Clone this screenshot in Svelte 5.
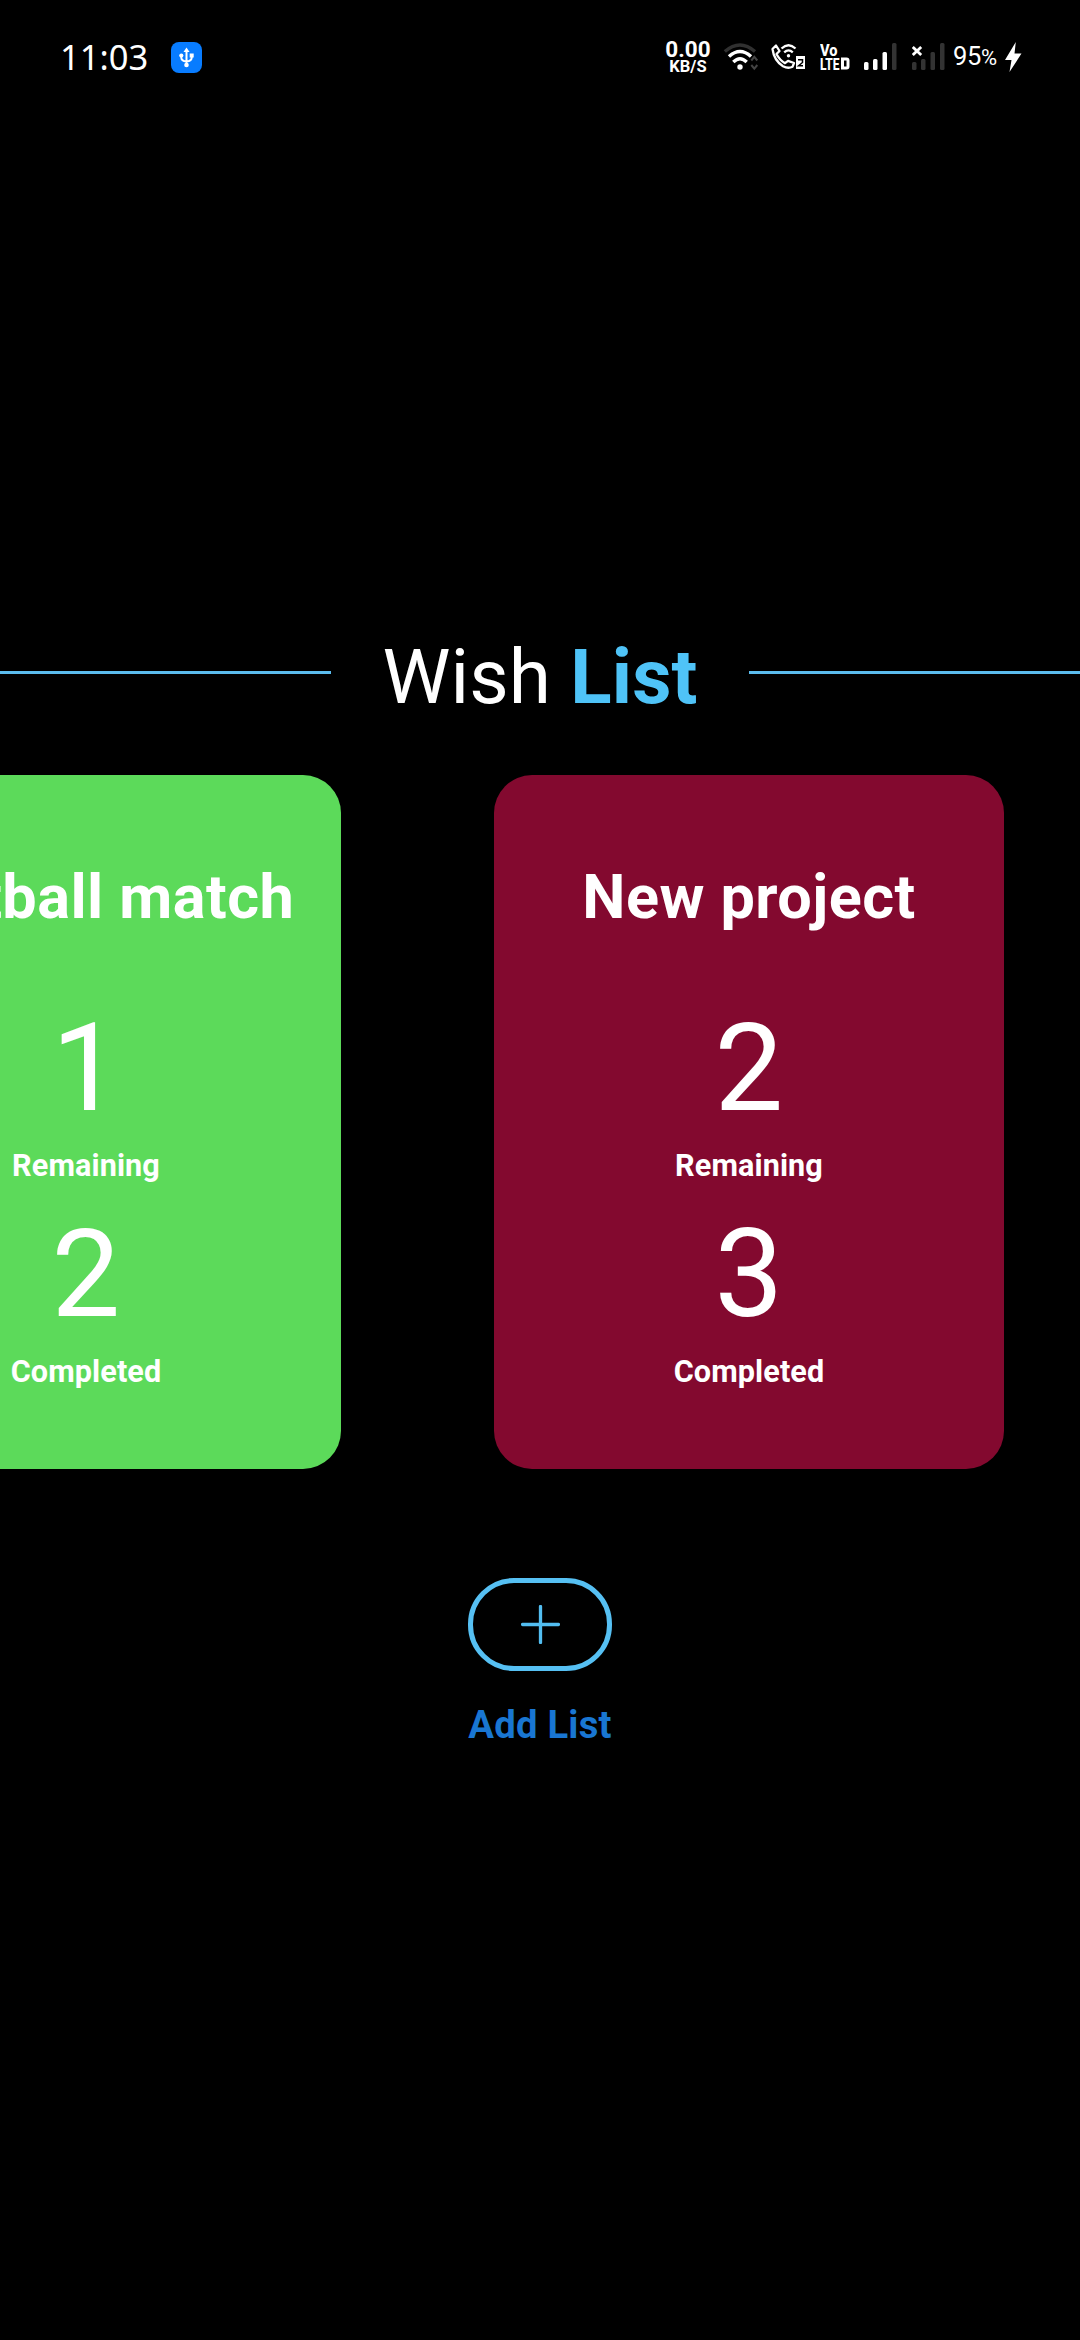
<script>
  const lists = [
    { name: 'Football match', remaining: 1, completed: 2, tone: 'green' },
    { name: 'New project', remaining: 2, completed: 3, tone: 'maroon' }
  ];
</script>

<main class="screen">
  <header class="status">
    <span class="clock">11:03</span>
    <svg class="usb" width="31" height="31" viewBox="0 0 31 31">
      <rect width="31" height="31" rx="8" fill="#087cff" />
      <g fill="none" stroke="#fff" stroke-width="2">
        <path d="M15.5 8v15M10.3 14v1.500q0 3.500 5.200 4.100q5.200-.6 5.200-4.100V14" />
      </g>
      <path d="M15.500 5.500l3 4.500h-6z" fill="#fff" />
      <circle cx="10.300" cy="13.500" r="2.100" fill="#fff" />
      <rect x="18.700" y="11.500" width="4" height="4" fill="#fff" />
      <circle cx="15.500" cy="23" r="2.300" fill="#fff" />
    </svg>

    <div class="speed"><b>0.00</b><small>KB/S</small></div>

    <svg class="wifi" width="36" height="30" viewBox="0 0 36 30" fill="none">
      <path d="M1.800 9.500Q17 -3.500 32 9.500" stroke="#303030" stroke-width="3.400" />
      <path d="M6 14.500Q17 4.500 28 14.500" stroke="#fff" stroke-width="3.400" />
      <path d="M10.300 20Q17 13.500 23.700 20" stroke="#fff" stroke-width="3.400" />
      <circle cx="17" cy="25" r="2.700" fill="#fff" />
      <path d="M28.300 18.500l3-3.600 3 3.600M28.300 23l3 3.600 3-3.600" stroke="#444" stroke-width="2" />
    </svg>

    <svg class="call" width="36" height="28" viewBox="0 0 36 28" fill="none" stroke="#fff">
      <path d="M1.500 6L5 2.500 8.500 8 5.500 11q3 6 8.500 9.200l3-2.400 6 2.200-1.500 3.800q-4.500 2.200-9.500-.6Q3 17.500 1.500 6z" stroke-width="2.300" stroke-linejoin="round" />
      <path d="M10.500 5.500Q17.500-1 24.500 5.500M13.200 9.300q4.300-3.900 8.600 0" stroke-width="2.300" />
      <circle cx="17.500" cy="12.800" r="1.700" fill="#fff" stroke="none" />
      <rect x="25" y="13" width="9" height="13" fill="#fff" stroke="none" />
      <path d="M27 16.700h4.500v2.800L27.600 22.800h4.400" stroke="#000" stroke-width="1.500" />
    </svg>

    <svg class="volte" width="31" height="30" viewBox="0 0 31 30">
      <text x="0" y="14" font-size="17" textLength="17.500" lengthAdjust="spacingAndGlyphs">Vo</text>
      <text x="0" y="27.500" font-size="17" textLength="19.500" lengthAdjust="spacingAndGlyphs">LTE</text>
      <path d="M22.500 17h4q1.500 0 1.500 1.500v6q0 1.500-1.500 1.500h-4z" fill="none" stroke="#fff" stroke-width="3" />
    </svg>

    <svg class="signal" width="33" height="28" viewBox="0 0 33 28" fill="#fff">
      <rect x="0" y="19" width="4.500" height="8" rx="1.500" />
      <rect x="9" y="16" width="4.500" height="11" rx="1.500" />
      <rect x="18.500" y="9" width="4.500" height="18" rx="1.500" />
      <rect x="28" y="0" width="4.500" height="27" rx="1.500" fill="#333" />
    </svg>

    <svg class="signal second" width="33" height="28" viewBox="0 0 33 28" fill="#333">
      <rect x="0" y="19" width="4.500" height="8" rx="1.500" />
      <rect x="9" y="16" width="4.500" height="11" rx="1.500" />
      <rect x="18.500" y="9" width="4.500" height="18" rx="1.500" />
      <rect x="28" y="0" width="4.500" height="27" rx="1.500" />
      <path d="M.8 4l8.400 8M9.200 4l-8.400 8" stroke="#fff" stroke-width="2.800" />
    </svg>

    <span class="percent">95<i>%</i></span>
    <svg class="bolt" width="17" height="30" viewBox="0 0 17 30">
      <path d="M10.800 0L0 18h6.500L4.500 30 16.500 11.500H9.500z" fill="#fff" />
    </svg>
  </header>

  <section class="heading">
    <div class="rule"></div>
    <h1>Wish <b>List</b></h1>
    <div class="rule"></div>
  </section>

  <section class="lists">
    {#each lists as list}
      <article class="card {list.tone}">
        <h2>{list.name}</h2>
        <div class="stat">
          <span class="count">{list.remaining}</span>
          <span class="label">Remaining</span>
        </div>
        <div class="stat">
          <span class="count">{list.completed}</span>
          <span class="label">Completed</span>
        </div>
      </article>
    {/each}
  </section>

  <section class="add">
    <button aria-label="Add List">
      <svg width="39" height="39" viewBox="0 0 39 39">
        <path d="M19.500 1.500v36M1.500 19.500h36" stroke="#52bdf0" stroke-width="3.300" stroke-linecap="round" />
      </svg>
    </button>
    <span>Add List</span>
  </section>
</main>

<style>
  :global(body) {
    margin: 0;
    background: #000;
  }
  .screen {
    width: 1080px;
    height: 2340px;
    overflow: hidden;
    background: #000;
    color: #fff;
    font-family: Roboto, 'Liberation Sans', sans-serif;
  }
  .status {
    display: flex;
    align-items: center;
    box-sizing: border-box;
    height: 114px;
    padding-left: 60px;
  }
  .clock {
    width: 111px;
    font: 400 34.500px/48px 'Noto Sans', Roboto, sans-serif;
    white-space: nowrap;
  }
  .speed {
    display: flex;
    flex-direction: column;
    align-items: center;
    width: 46px;
    margin-left: 463px;
  }
  .speed b {
    font-size: 22.500px;
    line-height: 17px;
  }
  .speed small {
    margin-top: 1px;
    font-size: 16.500px;
    font-weight: 700;
    line-height: 15px;
  }
  .wifi { margin-left: 12px; }
  .call { margin-left: 12px; }
  .volte {
    margin-left: 13px;
    fill: #fff;
    font-family: Roboto, sans-serif;
    font-weight: 800;
  }
  .signal { margin-left: 13px; }
  .second { margin-left: 15px; }
  .percent {
    width: 46px;
    margin-left: 8px;
    font-size: 25.500px;
    line-height: 30px;
    letter-spacing: -0.300px;
    white-space: nowrap;
  }
  .percent i {
    font-size: 22px;
    font-style: normal;
  }
  .bolt { margin-left: 6px; }

  .heading {
    display: flex;
    align-items: center;
    margin-top: 518px;
  }
  .rule {
    flex: 1;
    height: 3px;
    margin-bottom: 9px;
    background: #5bbcee;
  }
  h1 {
    width: 418px;
    margin: 0;
    font-size: 76.500px;
    font-weight: 400;
    line-height: 90px;
    letter-spacing: 0.150px;
    text-align: center;
    white-space: nowrap;
  }
  h1 b {
    color: #4fc3f7;
    font-weight: 700;
  }

  .lists {
    display: flex;
    gap: 153px;
    margin-top: 53px;
    margin-left: -169px;
  }
  .card {
    display: flex;
    flex: none;
    flex-direction: column;
    align-items: center;
    box-sizing: border-box;
    width: 510px;
    height: 694px;
    padding-top: 86px;
    border-radius: 38px;
  }
  .green { background: #5cda5a; }
  .maroon { background: #83092f; }
  h2 {
    margin: 0 0 63px;
    font-size: 61.200px;
    font-weight: 700;
    line-height: 72px;
    letter-spacing: 0.450px;
    white-space: nowrap;
  }
  .stat {
    display: flex;
    flex-direction: column;
    align-items: center;
    margin-bottom: 18px;
  }
  .count {
    font-size: 122.400px;
    line-height: 144px;
  }
  .label {
    margin-top: 8px;
    font-size: 30.600px;
    font-weight: 700;
    line-height: 36px;
    letter-spacing: 0.100px;
  }

  .add {
    display: flex;
    flex-direction: column;
    align-items: center;
    margin-top: 109px;
  }
  button {
    display: flex;
    align-items: center;
    justify-content: center;
    box-sizing: border-box;
    width: 144px;
    height: 93px;
    padding: 0 0 1px;
    border: 5px solid #56c0f3;
    border-radius: 46px;
    background: transparent;
  }
  .add span {
    margin-top: 31px;
    color: #1976d2;
    font-size: 38.250px;
    font-weight: 700;
    line-height: 46px;
    letter-spacing: 0.200px;
  }
</style>
